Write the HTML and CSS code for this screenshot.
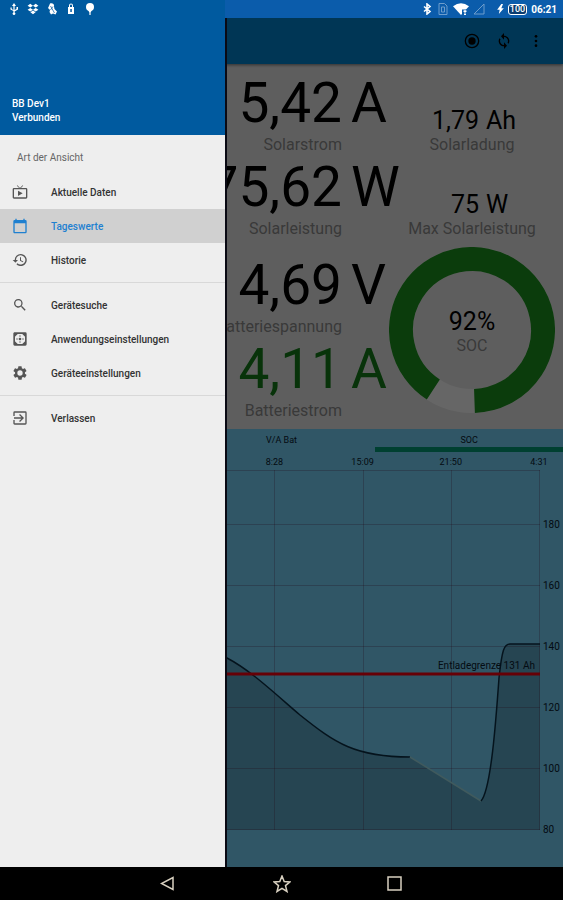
FILE: index.html
```html
<!DOCTYPE html>
<html lang="de">
    <head>
        <meta charset="UTF-8">
        <meta name="viewport" content="width=device-width, initial-scale=1.0">
        <title>Tageswerte</title>
        <link rel="stylesheet" href="styles.css">
    </head>
    <body>
        <header class="statusbar">
            <div class="status-group status-left">
                <svg viewBox="0 0 12 12"><path d="M6 0l2 3H6.600v4L8.500 6V4h1.500v2.500L6.600 8.500V9.500a1.300 1.300 0 1 1-1.200 0V8L2.500 6.500V4.500h1.200V6l1.700 1V3H4z"/></svg>
                <svg viewBox="0 0 12 12"><path d="M3.300 .8L6 2.700 3.300 4.600.6 2.700zM8.700 .8l2.700 1.900-2.700 1.900L6 2.700zM3.300 4.900L6 6.800 3.300 8.600.6 6.700zM8.700 4.900l2.700 1.800-2.700 1.900L6 6.800zM6 7.500l2.600 1.800L6 11.200 3.400 9.300z"/></svg>
                <svg viewBox="0 0 12 12"><path d="M4 .5c3-.8 4.500 1 4 3L8.500 6 11 8.500 9.500 11.500 7 10.500 5 11.500 3.500 9l.5-2-2-2 1-2z"/><path d="M4.500 3l4 7M7 3.500L4.500 7" fill="none" stroke="#0058a0" stroke-width=".7"/></svg>
                <svg viewBox="0 0 12 12"><path d="M4 4V2.500a2 2 0 0 1 4 0V4h1v7H3V4zM5 4h2V2.500a1 1 0 0 0-2 0z"/><path d="M5.300 6h1.500v3H5.300z" fill="#0058a0"/></svg>
                <svg viewBox="0 0 12 12"><circle cx="6" cy="4" r="4"/><path d="M4 7h4L6.600 9.500V12H5.400V9.500z"/></svg>
            </div>
            <div class="status-group status-right">
                <svg viewBox="0 0 12 12"><path d="M3 3.500l6 5L6 11V1l3 2.500-6 5" fill="none" stroke="#fff" stroke-width="1.600"/></svg>
                <svg class="faded" viewBox="0 0 12 12"><path d="M2 .5h5.500L10 3v8.500H2z" fill="none" stroke="#fff"/><path d="M4.500 4h3v5h-3z" fill="none" stroke="#fff"/></svg>
                <svg class="wifi" viewBox="0 0 16 12"><path d="M0 3.200Q8-2.800 16 3.200L8 12z"/><path d="M9 6.500h6V12H9z" fill="#0b5cab"/><path d="M10 8l2-1 2 1-2 2zM11 10.500h2V12h-2z"/></svg>
                <svg class="faded" viewBox="0 0 12 12"><path d="M11 1v10H1z" fill="none" stroke="#fff"/></svg>
                <svg class="bolt" viewBox="0 0 8 12"><path d="M5 0L0 7h3l-1 5 6-7H5L7 0z"/></svg>
                <span class="battery">100</span>
                <span class="clock">06:21</span>
            </div>
        </header>

        <div class="screen">
            <main class="page">
                <div class="appbar">
                    <button class="icon-button" aria-label="Aufnahme">
                        <svg viewBox="0 0 24 24"><circle cx="12" cy="12" r="10" fill="none" stroke="#000" stroke-width="2"/><circle cx="12" cy="12" r="5.500"/></svg>
                    </button>
                    <button class="icon-button" aria-label="Aktualisieren">
                        <svg viewBox="0 0 24 24"><path d="M12 4V0L7.500 5 12 10V6c3.300 0 6 2.700 6 6 0 1-.25 2-.7 2.800l1.500 1.500C19.500 15 20 13.600 20 12c0-4.400-3.600-8-8-8zm0 14c-3.300 0-6-2.700-6-6 0-1 .25-2 .7-2.800L5.200 7.700C4.500 9 4 10.400 4 12c0 4.400 3.600 8 8 8v4l4.500-5L12 14z"/></svg>
                    </button>
                    <button class="icon-button" aria-label="Mehr">
                        <svg viewBox="0 0 24 24"><circle cx="12" cy="5" r="2"/><circle cx="12" cy="12" r="2"/><circle cx="12" cy="19" r="2"/></svg>
                    </button>
                </div>

                <section class="readings">
                    <div class="reading">
                        <span class="value">5,42</span><span class="unit">A</span>
                        <span class="label">Solarstrom</span>
                    </div>
                    <div class="reading small">
                        <span class="value">1,79</span><span class="unit">Ah</span>
                        <span class="label">Solarladung</span>
                    </div>
                    <div class="reading">
                        <span class="value">75,62</span><span class="unit">W</span>
                        <span class="label">Solarleistung</span>
                    </div>
                    <div class="reading small">
                        <span class="value">75</span><span class="unit">W</span>
                        <span class="label">Max Solarleistung</span>
                    </div>
                    <div class="reading battery-voltage">
                        <span class="value">4,69</span><span class="unit">V</span>
                        <span class="label">Batteriespannung</span>
                    </div>
                    <div class="soc">
                        <svg class="soc-ring" viewBox="0 0 166 166">
                            <circle cx="83" cy="83" r="71" fill="none" stroke="#fff" stroke-width="24"/>
                            <circle cx="83" cy="83" r="71" fill="none" stroke="#1c961f" stroke-width="24" pathLength="360" stroke-dasharray="325 35" transform="rotate(123 83 83)"/>
                        </svg>
                        <div class="soc-text">
                            <span class="soc-value">92%</span>
                            <span class="label">SOC</span>
                        </div>
                    </div>
                    <div class="reading charging">
                        <span class="value">4,11</span><span class="unit">A</span>
                        <span class="label">Batteriestrom</span>
                    </div>
                </section>

                <section class="chart">
                    <div class="tabs">
                        <button class="tab tab-bat">V/A Bat</button>
                        <button class="tab active">SOC</button>
                    </div>
                    <div class="times">
                        <span class="first-time">8:28</span>
                        <span>15:09</span>
                        <span>21:50</span>
                        <span>4:31</span>
                    </div>
                    <div class="plot-row">
                        <div class="plot">
                            <svg class="plot-svg" viewBox="0 0 530 360" preserveAspectRatio="none">
                                <path d="M0 120C120 120 180 160 217 188C240 200 262 221 290 245C325 273 345 287 400 287L471 331C481 320 486 250 489 208C492 180 494 174 500 174H530V360H0z" fill="#000" fill-opacity=".2"/>
                                <path class="grid" d="M0 .5H530M0 54.500H530M0 115.500H530M0 176.500H530M0 237.500H530M0 298.500H530M0 359.500H530M88.500 0V360M176.500 0V360M264.500 0V360M353.500 0V360M441.500 0V360M529.500 0V360"/>
                                <path class="curve" d="M0 120C120 120 180 160 217 188C240 200 262 221 290 245C325 273 345 287 400 287"/>
                                <path class="curve gap" d="M400 287L471 331"/>
                                <path class="curve" d="M471 331C481 320 486 250 489 208C492 180 494 174 500 174H530"/>
                                <path class="limit" d="M0 204H530"/>
                            </svg>
                            <span class="limit-label">Entladegrenze 131 Ah</span>
                        </div>
                        <div class="scale">
                            <span>180</span>
                            <span>160</span>
                            <span>140</span>
                            <span>120</span>
                            <span>100</span>
                            <span>80</span>
                        </div>
                    </div>
                </section>
            </main>

            <div class="scrim"></div>

            <nav class="drawer">
                <div class="drawer-header">
                    <div>BB Dev1</div>
                    <div>Verbunden</div>
                </div>
                <h2 class="drawer-title">Art der Ansicht</h2>
                <a class="item" href="#aktuell">
                    <svg viewBox="0 0 24 24"><path d="M21 6h-7.600l3.300-3.300-.7-.7-4 4-4-4-.7.700L10.600 6H3a2 2 0 0 0-2 2v12c0 1.100.9 2 2 2h18a2 2 0 0 0 2-2V8a2 2 0 0 0-2-2zm0 14H3V8h18zM9 10v8l7-4z"/></svg>
                    Aktuelle Daten
                </a>
                <a class="item selected" href="#tageswerte">
                    <svg viewBox="0 0 24 24"><path d="M20 3h-1V1h-2v2H7V1H5v2H4a2 2 0 0 0-2 2v16c0 1.100.9 2 2 2h16a2 2 0 0 0 2-2V5a2 2 0 0 0-2-2zm0 18H4V8h16z"/></svg>
                    Tageswerte
                </a>
                <a class="item" href="#historie">
                    <svg viewBox="0 0 24 24"><path d="M13 3a9 9 0 0 0-9 9H1l3.900 3.900.1.100L9 12H6a7 7 0 1 1 2.100 4.900l-1.400 1.400A9 9 0 1 0 13 3zm-1 5v5l4.300 2.500.7-1.200-3.500-2.100V8z"/></svg>
                    Historie
                </a>
                <hr>
                <a class="item" href="#suche">
                    <svg viewBox="0 0 24 24"><path d="M15.500 14h-.8l-.3-.3A6.500 6.500 0 1 0 13.700 14.400l.3.300v.8l5 5 1.500-1.500zm-6 0a4.500 4.500 0 1 1 0-9 4.500 4.500 0 0 1 0 9z"/></svg>
                    Gerätesuche
                </a>
                <a class="item" href="#anwendung">
                    <svg viewBox="0 0 24 24"><path fill-rule="evenodd" d="M4 2h16a2 2 0 0 1 2 2v16a2 2 0 0 1-2 2H4a2 2 0 0 1-2-2V4c0-1.100.9-2 2-2zm.500 2.500v15h15v-15z"/><path d="M4 4h5L4 9zM20 4v5l-5-5zM4 20v-5l5 5zM20 20h-5l5-5z"/><circle cx="12" cy="12" r="2"/><circle cx="12" cy="7.500" r="1"/><circle cx="12" cy="16.500" r="1"/><circle cx="7.500" cy="12" r="1"/><circle cx="16.500" cy="12" r="1"/></svg>
                    Anwendungseinstellungen
                </a>
                <a class="item" href="#geraet">
                    <svg viewBox="0 0 24 24"><path fill-rule="evenodd" d="M19.400 13a7.800 7.800 0 0 0 0-2l2.100-1.700c.2-.1.200-.4.100-.6l-2-3.500c-.1-.2-.4-.3-.6-.2l-2.500 1a7.300 7.300 0 0 0-1.700-1l-.4-2.600A.5.500 0 0 0 14 2h-4c-.2 0-.5.200-.5.400L9.100 5c-.6.300-1.200.6-1.700 1l-2.500-1c-.2-.1-.5 0-.6.200l-2 3.500c-.1.200-.1.500.1.600L4.600 11a7.800 7.800 0 0 0 0 2l-2.200 1.700c-.2.100-.2.400-.1.600l2 3.500c.1.200.4.300.6.200l2.500-1c.5.400 1.100.7 1.700 1l.4 2.600c0 .2.300.4.500.4h4c.2 0 .5-.2.500-.4l.4-2.600c.6-.3 1.200-.6 1.700-1l2.500 1c.2.100.5 0 .6-.2l2-3.500c.1-.2.100-.5-.1-.6zM12 16a4 4 0 1 1 0-8 4 4 0 0 1 0 8z"/></svg>
                    Geräteeinstellungen
                </a>
                <hr>
                <a class="item" href="#verlassen">
                    <svg viewBox="0 0 24 24"><path d="M10.600 16.600L12 18l6-6-6-6-1.400 1.400L14.200 11H3v2h11.200zM20 2H4a2 2 0 0 0-2 2v5h2V4h16v16H4v-5H2v5c0 1.100.9 2 2 2h16a2 2 0 0 0 2-2V4a2 2 0 0 0-2-2z"/></svg>
                    Verlassen
                </a>
            </nav>
        </div>

        <footer class="navbar">
            <button class="nav-button" aria-label="Zurück">
                <svg viewBox="0 0 18 18"><path d="M13 2.500v12L1.500 8.500z"/></svg>
            </button>
            <button class="nav-button" aria-label="Start">
                <svg viewBox="0 0 18 18"><path d="M9 1l2.200 5.500 5.800.4-4.500 3.700L14 16.500 9 13.300 4 16.500l1.500-5.900L1 6.900l5.800-.4z"/></svg>
            </button>
            <button class="nav-button" aria-label="Übersicht">
                <svg viewBox="0 0 18 18"><path d="M3 2h13v13H3z"/></svg>
            </button>
        </footer>
    </body>
</html>
```
FILE: styles.css
```css
* {
    box-sizing: border-box;
}

body {
    margin: 0;
    min-height: 100vh;
    display: flex;
    flex-direction: column;
    font-family: Roboto, sans-serif;
    background-color: #000;
}

button {
    border: none;
    padding: 0;
    background: none;
    font: inherit;
    color: inherit;
}

/* status bar */
.statusbar {
    display: flex;
    justify-content: space-between;
    align-items: center;
    height: 18px;
    padding: 0 6px 0 8px;
    background-color: #0b5cab;
    background-image: linear-gradient(to right, #005a9f 40%, #0b5cab 40%);
    color: #fff;
}

.status-group {
    display: flex;
    align-items: center;
}

.status-group svg {
    width: 12px;
    height: 12px;
    fill: #fff;
}

.status-left {
    gap: 7px;
}

.status-right {
    gap: 4px;
}

.status-group .wifi {
    width: 16px;
}

.status-group .bolt {
    width: 7px;
    height: 10px;
    margin-left: 8px;
}

.faded {
    opacity: 0.4;
}

.battery {
    border: 1px solid #fff;
    border-radius: 3px;
    padding: 0 1px;
    font-size: 9px;
    line-height: 9px;
    font-weight: 500;
    background-color: #0b3c70;
}

.clock {
    font-size: 10px;
    font-weight: 700;
}

/* content behind the drawer */
.screen {
    position: relative;
    flex: 1;
    display: flex;
}

.page {
    flex: 1;
    display: flex;
    flex-direction: column;
    overflow: hidden;
    background-color: #ececec;
}

.scrim {
    position: absolute;
    inset: 0;
    background-color: rgba(0, 0, 0, 0.6);
}

.appbar {
    display: flex;
    justify-content: flex-end;
    align-items: center;
    gap: 16px;
    height: 46px;
    padding-right: 19px;
    background-color: #0087d5;
    box-shadow: 0 1px 3px rgba(0, 0, 0, 0.5);
}

.icon-button {
    display: flex;
    width: 16px;
    height: 16px;
}

.icon-button svg {
    width: 16px;
    height: 16px;
}

.readings {
    display: grid;
    grid-template-columns: 1fr 182px;
    padding: 11px 0 4px;
}

.reading {
    display: grid;
    grid-template-columns: 1fr 30px;
    column-gap: 9px;
    align-content: end;
    font-size: 55px;
    line-height: 56px;
    white-space: nowrap;
}

.value,
.reading .label {
    text-align: right;
}

.label {
    font-size: 16px;
    line-height: 28px;
    color: #909090;
}

.reading.small {
    grid-template-columns: 98px 1fr;
    column-gap: 7px;
    padding-bottom: 3px;
    font-size: 25px;
    line-height: 26px;
}

.small .label {
    grid-column: 1 / 3;
    line-height: 22px;
    text-align: center;
}

.battery-voltage {
    margin-top: 14px;
}

.charging {
    color: #14801a;
}

.soc {
    grid-row: span 2;
    display: grid;
    place-items: center;
    align-content: start;
    padding-top: 4px;
}

.soc-ring,
.soc-text {
    grid-area: 1 / 1;
}

.soc-ring {
    width: 166px;
    height: 166px;
}

.soc-text {
    display: flex;
    flex-direction: column;
    align-items: center;
    padding-top: 5px;
}

.soc-value {
    font-size: 25px;
    line-height: 26px;
}

.soc-text .label {
    line-height: 22px;
}

/* chart */
.chart {
    flex: 1;
    background-color: #78d7ff;
    font-size: 9px;
    color: #0a2030;
}

.tabs {
    display: grid;
    grid-template-columns: 1fr 1fr 1fr;
}

.tab {
    height: 23px;
    border-bottom: 5px solid transparent;
    padding-top: 4px;
}

.tab-bat {
    grid-column-start: 2;
}

.tab.active {
    border-bottom-color: #00a07a;
}

.times {
    display: grid;
    grid-template-columns: repeat(6, 1fr);
    height: 18px;
    margin: 0 -20px 0 54px;
    text-align: center;
    line-height: 20px;
}

.first-time {
    grid-column-start: 3;
}

.plot-row {
    display: flex;
    padding-left: 10px;
}

.plot {
    position: relative;
    flex: 1;
    height: 360px;
}

.plot-svg {
    display: block;
    width: 100%;
    height: 100%;
}

.grid {
    fill: none;
    stroke: rgba(80, 20, 50, 0.25);
    stroke-width: 1;
}

.curve {
    fill: none;
    stroke: #0c3048;
    stroke-width: 1.5;
}

.curve.gap {
    stroke: #a0e0e8;
}

.limit {
    stroke: #ff0010;
    stroke-width: 3;
}

.limit-label {
    position: absolute;
    right: 5px;
    bottom: 158px;
    font-size: 10px;
    line-height: 12px;
}

.scale {
    display: flex;
    flex-direction: column;
    width: 23px;
    padding: 24px 0 0 3px;
    font-size: 10px;
    line-height: 61px;
}

/* drawer */
.drawer {
    position: absolute;
    top: 0;
    bottom: 0;
    left: 0;
    width: 40%;
    background-color: #eee;
    box-shadow: 2px 0 0 #0a0a14;
    font-size: 10px;
    font-weight: 500;
    color: #333;
}

.drawer-header {
    display: flex;
    flex-direction: column;
    justify-content: flex-end;
    height: 117px;
    padding: 0 12px 10px;
    background-color: #005a9f;
    color: #fff;
    line-height: 14px;
}

.drawer-title {
    margin: 0;
    padding: 6px 17px 0;
    font-size: 10px;
    font-weight: 400;
    line-height: 34px;
    color: #666;
}

.item {
    display: flex;
    align-items: center;
    gap: 23px;
    height: 34px;
    padding-left: 12px;
    color: inherit;
    text-decoration: none;
}

.item svg {
    width: 16px;
    height: 16px;
    fill: #555;
}

.item.selected {
    background-color: #d0d0d0;
    color: #1f80d0;
}

.item.selected svg {
    fill: #1f80d0;
}

hr {
    margin: 5px 0;
    border: none;
    border-top: 1px solid #d8d8d8;
}

/* system navigation */
.navbar {
    display: flex;
    justify-content: center;
    height: 33px;
    background-color: #000;
}

.nav-button {
    display: flex;
    justify-content: center;
    align-items: center;
    width: 20%;
}

.nav-button svg {
    width: 18px;
    height: 18px;
    fill: none;
    stroke: #d8d0c0;
    stroke-width: 1.5;
}
```
